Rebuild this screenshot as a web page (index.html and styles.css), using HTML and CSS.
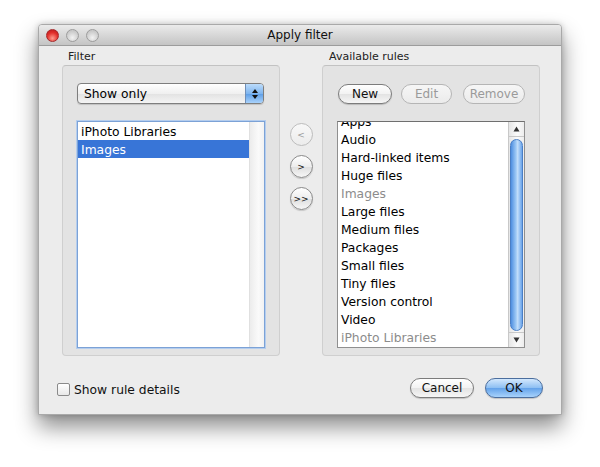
FILE: index.html
```html
<html>
	<head>
		<title>Apply filter</title>
		<link rel="stylesheet" href="styles.css">
	</head>
	<body>
		<div class="window">
			<div class="titlebar">
				<div class="lights">
					<span class="light red"></span>
					<span class="light"></span>
					<span class="light"></span>
				</div>
				<div class="title">Apply filter</div>
			</div>
			<div class="columns">
				<div class="group-col">
					<div class="group-label">Filter</div>
					<div class="group">
						<div class="popup">
							<span class="popup-text">Show only</span>
							<span class="popup-arrows">
								<svg width="8" height="12" viewBox="0 0 8 12"><path d="M4 1 L7 5 L1 5 Z M4 11 L7 7 L1 7 Z" fill="#111"/></svg>
							</span>
						</div>
						<div class="list focused">
							<div class="list-items">
								<div class="item">iPhoto Libraries</div>
								<div class="item selected">Images</div>
							</div>
							<div class="track"></div>
						</div>
					</div>
				</div>
				<div class="move-col">
					<button class="round disabled">&lt;</button>
					<button class="round">&gt;</button>
					<button class="round">&gt;&gt;</button>
				</div>
				<div class="group-col">
					<div class="group-label right-label">Available rules</div>
					<div class="group">
						<div class="button-row">
							<button class="btn btn-new">New</button>
							<button class="btn btn-edit disabled">Edit</button>
							<button class="btn btn-remove disabled">Remove</button>
						</div>
						<div class="list">
							<div class="list-items scrolled">
								<div class="item">Apps</div>
								<div class="item">Audio</div>
								<div class="item">Hard-linked items</div>
								<div class="item">Huge files</div>
								<div class="item dim">Images</div>
								<div class="item">Large files</div>
								<div class="item">Medium files</div>
								<div class="item">Packages</div>
								<div class="item">Small files</div>
								<div class="item">Tiny files</div>
								<div class="item">Version control</div>
								<div class="item">Video</div>
								<div class="item dim">iPhoto Libraries</div>
							</div>
							<div class="scrollbar">
								<div class="arrow"><svg width="7" height="6" viewBox="0 0 7 6"><path d="M3.5 0.5 L6.5 5.5 L0.5 5.5 Z" fill="#333"/></svg></div>
								<div class="thumb-area"><div class="thumb"></div></div>
								<div class="arrow"><svg width="7" height="6" viewBox="0 0 7 6"><path d="M3.5 5.5 L6.5 0.5 L0.5 0.5 Z" fill="#333"/></svg></div>
							</div>
						</div>
					</div>
				</div>
			</div>
			<div class="footer">
				<label class="check">
					<span class="box"></span>
					<span>Show rule details</span>
				</label>
				<div class="footer-buttons">
					<button class="btn btn-cancel">Cancel</button>
					<button class="btn btn-ok">OK</button>
				</div>
			</div>
		</div>
	</body>
</html>
```

FILE: styles.css
```css
* {
  margin: 0;
  padding: 0;
  box-sizing: border-box;
}

body {
  background-color: #fff;
  font-family: "DejaVu Sans", Verdana, sans-serif;
  font-size: 12px;
  color: #000;
}

.window {
  width: 524px;
  height: 391px;
  margin: 24px 0 0 38px;
  background-color: #ececec;
  border: 1px solid #a9a9a9;
  border-radius: 4px 4px 0 0;
  box-shadow: 0 12px 22px rgba(0, 0, 0, 0.45), 0 0 6px rgba(0, 0, 0, 0.2);
  display: flex;
  flex-direction: column;
}

.titlebar {
  height: 21px;
  background: linear-gradient(#ebebeb, #c4c4c4);
  border-bottom: 1px solid #9c9c9c;
  border-radius: 3px 3px 0 0;
  display: flex;
  align-items: center;
  position: relative;
}

.lights {
  display: flex;
  gap: 7px;
  padding-left: 7px;
}

.light {
  width: 13px;
  height: 13px;
  border-radius: 50%;
  border: 1px solid #9d9d9d;
  background: radial-gradient(circle at 50% 70%, #f2f2f2, #c9c9c9 70%);
}

.light.red {
  border-color: #a5282a;
  background: radial-gradient(circle at 50% 75%, #ff9c8e, #e2302b 55%, #b5171a);
}

.title {
  position: absolute;
  left: 0;
  right: 0;
  text-align: center;
  font-size: 12px;
  color: #111;
}

.columns {
  display: flex;
  padding: 4px 21px 0 23px;
}

.group-col {
  width: 218px;
}

.group-label {
  height: 15px;
  font-size: 11px;
  padding-left: 6px;
  color: #222;
}

.right-label {
  padding-left: 7px;
}

.group {
  height: 291px;
  background-color: #e3e3e3;
  border: 1px solid #cfcfcf;
  border-top-color: #c2c2c2;
  border-radius: 4px;
  padding: 17px 14px 7px 14px;
  display: flex;
  flex-direction: column;
  gap: 17px;
}

.popup {
  height: 21px;
  width: 187px;
  border: 1px solid #7e7e7e;
  border-radius: 4px;
  background: linear-gradient(#ffffff, #f0f0f0 50%, #e2e2e2 51%, #f4f4f4);
  display: flex;
  align-items: center;
  box-shadow: 0 1px 1px rgba(0, 0, 0, 0.15);
  overflow: hidden;
  font-size: 12.3px;
}

.popup-text {
  flex: 1;
  padding-left: 6px;
}

.popup-arrows {
  width: 18px;
  height: 100%;
  background: linear-gradient(#bcdcfb, #7fb5ef 50%, #5c9de6 51%, #a9d2fb);
  border-left: 1px solid #6f8fb8;
  display: flex;
  align-items: center;
  justify-content: center;
}

.list {
  width: 188px;
  height: 227px;
  background-color: #fff;
  border: 1px solid #8f8f8f;
  border-top-color: #6f6f6f;
  display: flex;
  overflow: hidden;
}

.list.focused {
  border-color: #7ca2d6;
  box-shadow: 0 0 0 1px #b4cdee;
}

.list-items {
  flex: 1;
}

.list-items.scrolled {
  margin-top: -10px;
}

.item {
  height: 18px;
  line-height: 20px;
  padding-left: 3px;
  white-space: nowrap;
  font-size: 12.3px;
}

.item.selected {
  background-color: #3875d7;
  color: #fff;
}

.item.dim {
  color: #8c8c8c;
}

.track {
  width: 15px;
  background: linear-gradient(90deg, #ececec, #fafafa 60%, #f2f2f2);
  border-left: 1px solid #e0e0e0;
}

.scrollbar {
  width: 16px;
  border-left: 1px solid #c8c8c8;
  background: linear-gradient(90deg, #e6e6e6, #fbfbfb 55%, #ededed);
  display: flex;
  flex-direction: column;
}

.arrow {
  height: 15px;
  display: flex;
  align-items: center;
  justify-content: center;
}

.arrow:last-child {
  border-top: 1px solid #c8c8c8;
}

.arrow:first-child {
  border-bottom: 1px solid #c8c8c8;
}

.thumb-area {
  flex: 1;
  padding: 2px 1px 1px 1px;
}

.thumb {
  height: 100%;
  border-radius: 7px;
  border: 1px solid #4a7fc6;
  background: linear-gradient(90deg, #4f8fe0, #9cc8f5 45%, #c2defa 60%, #6aa4ea);
}

.move-col {
  width: 42px;
  padding-top: 73px;
  display: flex;
  flex-direction: column;
  align-items: center;
  gap: 9px;
}

.round {
  width: 23px;
  height: 23px;
  border-radius: 50%;
  border: 1px solid #8a8a8a;
  background: linear-gradient(#ffffff, #ededed 50%, #dedede 51%, #f6f6f6);
  font-family: "DejaVu Sans", sans-serif;
  font-size: 9px;
  color: #111;
  box-shadow: 0 1px 1px rgba(0, 0, 0, 0.15);
}

.round.disabled {
  border-color: #bdbdbd;
  color: #9a9a9a;
  background: linear-gradient(#f8f8f8, #ececec);
  box-shadow: none;
}

.button-row {
  height: 21px;
  display: flex;
  gap: 9px;
  align-items: center;
}

.btn {
  height: 20px;
  border-radius: 10px;
  border: 1px solid #7c7c7c;
  background: linear-gradient(#ffffff, #f2f2f2 50%, #e3e3e3 51%, #f6f6f6);
  font-family: "DejaVu Sans", sans-serif;
  font-size: 12px;
  color: #111;
  box-shadow: 0 1px 1px rgba(0, 0, 0, 0.18);
}

.btn.disabled {
  border-color: #b5b5b5;
  color: #9a9a9a;
  background: linear-gradient(#f6f6f6, #ebebeb);
  box-shadow: none;
}

.btn-new {
  width: 54px;
  margin-left: 1px;
}

.btn-edit {
  width: 51px;
}

.btn-remove {
  width: 62px;
  margin-left: 2px;
}

.footer {
  display: flex;
  justify-content: space-between;
  align-items: center;
  padding: 22px 18px 0 18px;
}

.check {
  display: flex;
  align-items: center;
  gap: 4px;
  margin-top: 3px;
  color: #111;
  font-size: 12.3px;
}

.box {
  width: 13px;
  height: 13px;
  border: 1px solid #8a8a8a;
  border-radius: 2px;
  background: linear-gradient(#ffffff, #e8e8e8);
}

.footer-buttons {
  display: flex;
  gap: 11px;
}

.btn-cancel {
  width: 64px;
}

.btn-ok {
  width: 58px;
  border-color: #4b6e9e;
  background: linear-gradient(#d3e8fd, #8fc0f3 48%, #64a3ea 52%, #a8d2fb);
}
```
